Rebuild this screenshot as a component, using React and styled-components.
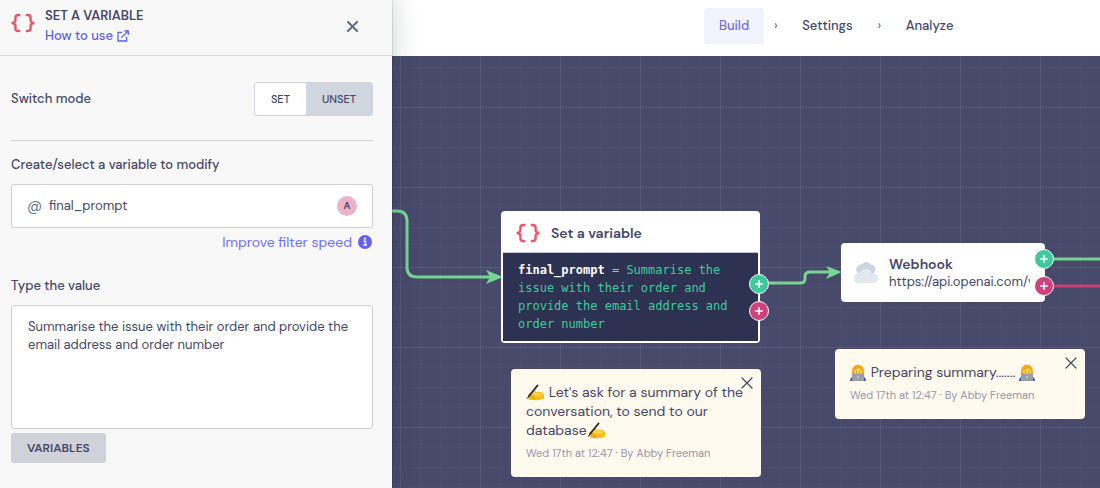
import React, { useState } from 'react';
import styled, { createGlobalStyle } from 'styled-components';

const GlobalStyle = createGlobalStyle`
    *{
        box-sizing: border-box;
    }
    body{
        margin: 0;
        font-family: 'DM Sans', Inter, 'Liberation Sans', sans-serif;
        font-size: 13px;
        line-height: 18px;
        color: #44476a;
        -webkit-font-smoothing: antialiased;
    }
    button, input, textarea{
        font: inherit;
        color: inherit;
        margin: 0;
    }
    h1, h2, p{
        margin: 0;
    }
`;

/* ---------- icons ---------- */

function BracesIcon() {
    return (
        <svg width="24" height="20" viewBox="0 0 24 20" fill="none" stroke="#ee5468" strokeWidth="2.4" strokeLinecap="round" strokeLinejoin="round">
            <path d="M8.2 2H7.2Q4.4 2 4.4 4.8V7.2Q4.4 9 1.6 10Q4.4 11 4.4 12.8V15.2Q4.4 18 7.2 18H8.2" />
            <path d="M15.8 2H16.8Q19.6 2 19.6 4.8V7.2Q19.6 9 22.4 10Q19.6 11 19.6 12.8V15.2Q19.6 18 16.8 18H15.8" />
        </svg>
    );
}

function ExternalIcon() {
    return (
        <svg width="12" height="12" viewBox="0 0 12 12" fill="none" stroke="#5a5ff0" strokeWidth="1.3">
            <path d="M5.2 2.3H1V11H9.6V6.8" />
            <path d="M4.4 7.6L11 1M7.2 .8H11.3V4.9" />
        </svg>
    );
}

function CrossIcon({ size, color, width }) {
    return (
        <svg width={size} height={size} viewBox="0 0 12 12" fill="none" stroke={color} strokeWidth={width} strokeLinecap="round">
            <path d="M1 1L11 11M11 1L1 11" />
        </svg>
    );
}

function InfoIcon() {
    return (
        <svg width="14" height="14" viewBox="0 0 14 14">
            <circle cx="7" cy="7" r="7" fill="#6360f2" />
            <circle cx="6.9" cy="3.7" r="1.1" fill="#fff" />
            <path d="M5.4 6.2H7.5V10M5.2 10.1H9" fill="none" stroke="#fff" strokeWidth="1.4" />
        </svg>
    );
}

function PlusIcon() {
    return (
        <svg width="8" height="8" viewBox="0 0 8 8" fill="none" stroke="#fff" strokeWidth="1.6" strokeLinecap="round">
            <path d="M4 .8V7.2M.8 4H7.2" />
        </svg>
    );
}

function CloudIcon() {
    return (
        <svg width="26" height="22" viewBox="0 0 26 22">
            <path fill="#ccd4dc" d="M6.5 12A4.2 4.2 0 0 1 5.3 4.3A4 4 0 0 1 9.4 2.2A4.6 4.6 0 0 1 17.4 2.6A4.2 4.2 0 0 1 22 8.6A4 4 0 0 1 20 12Z" />
            <path fill="#e0e7ed" d="M5 21A4.8 4.8 0 0 1 4.6 11.6A3.6 3.6 0 0 1 7.6 9.9A6.2 6.2 0 0 1 18.8 11.2A5 5 0 0 1 21 21Z" />
        </svg>
    );
}

function WritingHand() {
    return (
        <Emoji width="18" height="17" viewBox="0 0 18 17" role="img" aria-label="writing hand">
            <path fill="#fdbd1c" d="M1.6 11.6L5 8L8 6.6Q9.8 5.8 10 7.2L9.4 8.2L13.4 7.8Q16.4 8.2 18 10V14.8Q14 16.4 9.4 16.2L3.4 15.8Q1.6 15.2 2.6 13.6Z" />
            <path fill="#ffd64a" d="M5.6 8.6L9 7L8.2 9.2L13 8.8L16.6 11L11 12L6 11Z" />
            <path fill="none" stroke="#e29a10" strokeWidth=".7" strokeLinecap="round" d="M4.6 12L8 11.4M4.6 13.8L8.6 13.2M6 15.2L9.4 14.8" />
            <path fill="none" stroke="#2b2b30" strokeWidth="1.8" strokeLinecap="round" d="M11.6 1.4L4 10.8" />
            <path fill="#2b2b30" d="M4.8 11.4L3.2 10L.4 15.6Z" />
        </Emoji>
    );
}

function Technologist() {
    return (
        <Emoji width="16" height="17" viewBox="0 0 16 17" role="img" aria-label="technologist">
            <path fill="#3f56c9" d="M0 17Q.2 13 3 12.4H13Q15.8 13 16 17Z" />
            <path fill="#f5a81c" d="M2.2 11Q.8 9.6 2.2 7.6Q1.8 1.2 8 .8Q14.2 1.2 13.8 7.6Q15.2 9.6 13.8 11Q12.6 12 8 12Q3.4 12 2.2 11Z" />
            <path fill="#ffd95a" d="M4 6.8Q7.8 5.8 9 3.8Q9.8 5.8 12 6.6Q12.2 11.4 8 11.6Q3.8 11.4 4 6.8Z" />
            <circle cx="6.3" cy="7.8" r=".6" fill="#6b4413" />
            <circle cx="9.8" cy="7.8" r=".6" fill="#6b4413" />
            <rect x="2" y="9.6" width="12" height="7.4" rx=".8" fill="#9a9ea6" />
            <circle cx="8" cy="13.2" r=".9" fill="#d5d8dd" />
        </Emoji>
    );
}

/* ---------- page ---------- */

function SettingsPanel() {
    const [mode, setMode] = useState('set');
    const [name, setName] = useState('final_prompt');
    const [value, setValue] = useState('Summarise the issue with their order and provide the email address and order number');

    return (
        <Panel>
            <PanelHeader>
                <BracesIcon />
                <PanelTitle>
                    <h1>SET A VARIABLE</h1>
                    <HelpLink href="#help">How to use <ExternalIcon /></HelpLink>
                </PanelTitle>
                <CloseButton type="button" aria-label="Close">
                    <CrossIcon size={11} color="#5b7083" width={2.2} />
                </CloseButton>
            </PanelHeader>
            <PanelBody>
                <ModeRow>
                    <span id="mode-label">Switch mode</span>
                    <Toggle role="group" aria-labelledby="mode-label">
                        <ToggleButton type="button" $active={mode === 'set'} aria-pressed={mode === 'set'} onClick={() => setMode('set')}>SET</ToggleButton>
                        <ToggleButton type="button" $active={mode === 'unset'} aria-pressed={mode === 'unset'} onClick={() => setMode('unset')}>UNSET</ToggleButton>
                    </Toggle>
                </ModeRow>
                <FieldLabel htmlFor="variable">Create/select a variable to modify</FieldLabel>
                <VariableField>
                    <At>@</At>
                    <input id="variable" value={name} onChange={(e) => setName(e.target.value)} />
                    <Badge>A</Badge>
                </VariableField>
                <FilterLink href="#filter">Improve filter speed <InfoIcon /></FilterLink>
                <FieldLabel htmlFor="value">Type the value</FieldLabel>
                <ValueArea id="value" spellCheck="false" value={value} onChange={(e) => setValue(e.target.value)} />
                <VariablesButton type="button">VARIABLES</VariablesButton>
            </PanelBody>
        </Panel>
    );
}

function Ports() {
    return (
        <PortList>
            <Port type="button" aria-label="Add success step" $color="#3ecb9c"><PlusIcon /></Port>
            <Port type="button" aria-label="Add failure step" $color="#d0417e"><PlusIcon /></Port>
        </PortList>
    );
}

function StickyNote({ x, y, children }) {
    return (
        <Note $x={x} $y={y}>
            <NoteClose type="button" aria-label="Close note">
                <CrossIcon size={12} color="#3f4a63" width={1.2} />
            </NoteClose>
            <NoteText>{children}</NoteText>
            <NoteMeta>Wed 17th at 12:47 · By Abby Freeman</NoteMeta>
        </Note>
    );
}

function Canvas() {
    return (
        <CanvasStyled>
            <Edges aria-hidden="true">
                <g fill="none" stroke="#77d592" strokeWidth="3">
                    <path d="M0 155H5Q15 155 15 165V211Q15 221 25 221H98" />
                    <path d="M376 227H408Q413 227 413 223V220Q413 216 418 216H438" />
                    <path d="M660 203H4000" />
                </g>
                <path d="M660 230H4000" stroke="#cf3b78" strokeWidth="3" />
                <path fill="#77d592" d="M94 214L111 221L94 228L98 221Z" />
                <path fill="#77d592" d="M434 210L450 216L434 223L438 216Z" />
            </Edges>

            <VariableNode $x={109} $y={155}>
                <NodeHeader>
                    <BracesIcon />
                    <NodeTitle>Set a variable</NodeTitle>
                </NodeHeader>
                <NodeCode><b>final_prompt</b> = <span>Summarise the issue with their order and provide the email address and order number</span></NodeCode>
                <Ports />
            </VariableNode>

            <WebhookNode $x={449} $y={187}>
                <CloudIcon />
                <WebhookText>
                    <NodeTitle>Webhook</NodeTitle>
                    <p>https://api.openai.com/v1</p>
                </WebhookText>
                <Ports />
            </WebhookNode>

            <StickyNote x={119} y={313}>
                <WritingHand /> Let's ask for a summary of the conversation, to send to our database<WritingHand />
            </StickyNote>
            <StickyNote x={443} y={293}>
                <Technologist /> Preparing summary....... <Technologist />
            </StickyNote>
        </CanvasStyled>
    );
}

function App() {
    return (
        <AppStyled>
            <GlobalStyle />
            <SettingsPanel />
            <Workspace>
                <TopBar>
                    <Tab href="#build" $active aria-current="page">Build</Tab>
                    <Chevron>›</Chevron>
                    <Tab href="#settings">Settings</Tab>
                    <Chevron>›</Chevron>
                    <Tab href="#analyze">Analyze</Tab>
                </TopBar>
                <Canvas />
            </Workspace>
        </AppStyled>
    );
}

const AppStyled = styled.div`
    display: flex;
    min-height: 100vh;
`;

const Panel = styled.aside`
    position: relative;
    z-index: 1;
    flex: 0 0 392px;
    background: #f8f8f8;
    box-shadow: 0 0 1px rgba(0, 0, 0, 0.6), 2px 0 24px rgba(30, 45, 45, 0.2);
`;

const PanelHeader = styled.header`
    display: flex;
    align-items: flex-start;
    gap: 10px;
    height: 56px;
    padding: 7px 28px 0 11px;
    border-bottom: 1px solid #dcdcdf;
    > svg{
        margin-top: 6px;
    }
`;

const PanelTitle = styled.div`
    flex: 1;
    h1{
        font-size: 13px;
        font-weight: 600;
        line-height: 18px;
    }
`;

const HelpLink = styled.a`
    display: inline-flex;
    align-items: center;
    gap: 4px;
    line-height: 22px;
    font-weight: 500;
    color: #5a5ff0;
    text-decoration: none;
`;

const CloseButton = styled.button`
    display: flex;
    padding: 6px;
    margin-top: 8px;
    border: 0;
    background: none;
`;

const PanelBody = styled.div`
    display: flex;
    flex-direction: column;
    padding: 26px 19px 24px 11px;
`;

const ModeRow = styled.div`
    display: flex;
    align-items: center;
    justify-content: space-between;
    padding-bottom: 24px;
    margin-bottom: 15px;
    border-bottom: 1px solid #d2d2d6;
    font-weight: 500;
`;

const Toggle = styled.div`
    display: flex;
    height: 34px;
    border: 1px solid #d0d3da;
    border-radius: 3px;
    overflow: hidden;
`;

const ToggleButton = styled.button`
    padding: 0 16px;
    border: 0;
    font-size: 11px;
    font-weight: 500;
    background: ${({ $active }) => ($active ? '#fff' : '#cfd6dd')};
`;

const FieldLabel = styled.label`
    margin-bottom: 10px;
    font-weight: 500;
`;

const VariableField = styled.div`
    display: flex;
    align-items: center;
    height: 44px;
    padding: 0 15px;
    border: 1px solid #d0d0d3;
    border-radius: 3px;
    background: #fff;
    input{
        flex: 1;
        min-width: 0;
        padding: 0;
        border: 0;
        outline: 0;
        background: none;
    }
`;

const At = styled.span`
    width: 22px;
    font-size: 15px;
    color: #5b7083;
`;

const Badge = styled.span`
    width: 20px;
    border-radius: 50%;
    background: #ebb2ca;
    font-size: 10px;
    font-weight: 600;
    line-height: 20px;
    text-align: center;
`;

const FilterLink = styled.a`
    display: flex;
    align-items: center;
    align-self: flex-end;
    gap: 6px;
    margin: 5px 1px 26px;
    font-size: 14px;
    color: #6f70f5;
    text-decoration: none;
`;

const ValueArea = styled.textarea`
    height: 124px;
    padding: 12px 16px;
    border: 1px solid #d0d0d3;
    border-radius: 3px;
    outline: 0;
    resize: none;
    background: #fff;
`;

const VariablesButton = styled.button`
    align-self: flex-start;
    height: 30px;
    padding: 0 16px;
    margin-top: 4px;
    border: 0;
    border-radius: 3px;
    background: #d1d2d9;
    font-size: 12px;
    font-weight: 600;
`;

const Workspace = styled.main`
    flex: 1;
    min-width: 0;
    display: flex;
    flex-direction: column;
`;

const TopBar = styled.nav`
    display: flex;
    align-items: center;
    height: 56px;
    padding: 0 16px 4px 312px;
    background: #fff;
`;

const Tab = styled.a`
    padding: 9px 15px;
    border-radius: 3px;
    font-weight: 500;
    text-decoration: none;
    color: ${({ $active }) => ($active ? '#6a6cf0' : '#44476a')};
    background: ${({ $active }) => ($active ? '#f3f3fd' : 'none')};
`;

const Chevron = styled.span`
    width: 23px;
    text-align: center;
    color: #5d5f75;
`;

const CanvasStyled = styled.div`
    position: relative;
    flex: 1;
    overflow: hidden;
    background-color: #474a6a;
    background-image:
        linear-gradient(90deg, #555879 1px, transparent 1px),
        linear-gradient(#555879 1px, transparent 1px),
        linear-gradient(90deg, #4b4e6f 1px, transparent 1px),
        linear-gradient(#4b4e6f 1px, transparent 1px);
    background-size: 80px 80px, 80px 80px, 20px 20px, 20px 20px;
    background-position: 8px 51px, 8px 51px, 8px 51px, 8px 51px;
`;

const Edges = styled.svg`
    position: absolute;
    inset: 0;
    width: 100%;
    height: 100%;
`;

const Node = styled.section`
    position: absolute;
    left: ${({ $x }) => $x}px;
    top: ${({ $y }) => $y}px;
    border-radius: 4px;
    background: #fff;
`;

const VariableNode = styled(Node)`
    width: 259px;
    padding: 0 2px 2px;
`;

const NodeHeader = styled.div`
    display: flex;
    align-items: center;
    gap: 11px;
    height: 42px;
    padding: 3px 13px 0;
    border-bottom: 1px solid #c3c5d0;
`;

const NodeTitle = styled.h2`
    font-size: 14px;
    font-weight: 600;
    line-height: 18px;
`;

const NodeCode = styled.p`
    padding: 8px 15px;
    background: #2d3152;
    font-family: 'DejaVu Sans Mono', 'Liberation Mono', monospace;
    font-size: 12px;
    color: #b4b6c6;
    b{
        color: #fff;
    }
    span{
        color: #3ecb9c;
    }
`;

const WebhookNode = styled(Node)`
    display: flex;
    align-items: center;
    gap: 10px;
    width: 204px;
    height: 59px;
    padding: 0 15px 0 12px;
    > svg{
        flex: none;
    }
`;

const WebhookText = styled.div`
    min-width: 0;
    overflow: hidden;
    white-space: nowrap;
`;

const PortList = styled.div`
    position: absolute;
    right: -9px;
    bottom: 6px;
    display: grid;
    gap: 7px;
    ${VariableNode} &{
        bottom: 22px;
    }
`;

const Port = styled.button`
    display: grid;
    place-items: center;
    width: 20px;
    height: 20px;
    padding: 0;
    border: 1px solid #fff;
    border-radius: 50%;
    background: ${({ $color }) => $color};
`;

const Note = styled.article`
    position: absolute;
    left: ${({ $x }) => $x}px;
    top: ${({ $y }) => $y}px;
    width: 250px;
    padding: 14px 15px 15px;
    border-radius: 4px;
    background: #fff9ee;
`;

const NoteClose = styled.button`
    position: absolute;
    top: 4px;
    right: 4px;
    display: flex;
    padding: 4px;
    border: 0;
    background: none;
`;

const NoteText = styled.p`
    font-size: 14px;
    line-height: 19px;
`;

const NoteMeta = styled.p`
    margin-top: 4px;
    font-size: 11px;
    color: #9698aa;
`;

const Emoji = styled.svg`
    margin: -2px 1px -2px 0;
    vertical-align: -2px;
`;

export default App;
